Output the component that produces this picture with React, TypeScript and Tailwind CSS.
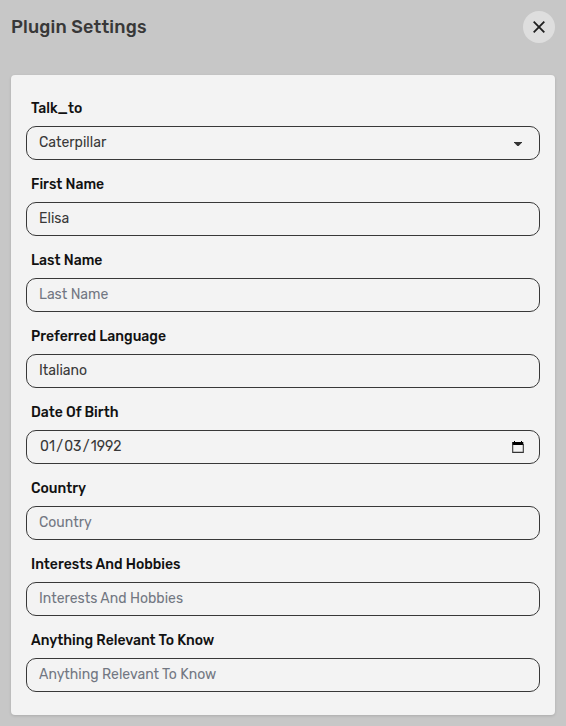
type Field = {
  label: string;
  value?: string;
  kind?: "select" | "date";
};

const fields: Field[] = [
  { label: "Talk_to", value: "Caterpillar", kind: "select" },
  { label: "First Name", value: "Elisa" },
  { label: "Last Name" },
  { label: "Preferred Language", value: "Italiano" },
  { label: "Date Of Birth", value: "01/03/1992", kind: "date" },
  { label: "Country" },
  { label: "Interests And Hobbies" },
  { label: "Anything Relevant To Know" },
];

function CalendarIcon() {
  return (
    <svg width="14" height="14" viewBox="0 0 14 14" className="mr-[2px] shrink-0">
      <path d="M3 1h1v1h6V1h1v1h1.3v3H1.2V2H3z" fill="#000" />
      <path d="M1.7 4v8.4h10.6V4" fill="none" stroke="#333" strokeWidth="1.1" />
    </svg>
  );
}

function DateValue({ value }: { value: string }) {
  const [month, day, year] = value.split("/");
  return (
    <span className="flex text-[#383838]">
      <span className="px-px">{month}</span>
      <span className="px-[0.25px]">/</span>
      <span className="px-px">{day}</span>
      <span className="px-[0.25px]">/</span>
      <span className="px-px">{year}</span>
    </span>
  );
}

function FieldRow({ field }: { field: Field }) {
  return (
    <div className="flex flex-col">
      <div className="flex h-9 items-center pt-[2px] pl-[5px] text-sm font-medium text-[#111]">{field.label}</div>
      <div className="flex h-[34px] items-center justify-between rounded-[10px] border border-[#383838] px-3 text-sm">
        {field.kind === "date" && field.value ? (
          <DateValue value={field.value} />
        ) : field.value ? (
          <span className="text-[#383838]">{field.value}</span>
        ) : (
          <span className="text-[#727782]">{field.label}</span>
        )}
        {field.kind === "select" && (
          <svg width="8" height="4" viewBox="0 0 8 4" className="mt-px mr-[5px]">
            <path d="M0 0h8v.6L4.6 4H3.4L0 .6z" fill="#333" />
          </svg>
        )}
        {field.kind === "date" && <CalendarIcon />}
      </div>
    </div>
  );
}

export default function App() {
  return (
    <div className="flex h-[726px] w-[566px] flex-col bg-[#c7c7c7] px-[11px] pt-[11px] font-['Rubik','Roboto',sans-serif]">
      <header className="flex h-8 items-center justify-between">
        <h1 className="text-lg font-medium tracking-[0.18px] text-[#383838]">Plugin Settings</h1>
        <button aria-label="Close" className="flex size-8 items-center justify-center rounded-full bg-[#dedede]">
          <svg width="12" height="12" viewBox="0 0 12 12">
            <path d="M.7.7l10.6 10.6M11.3.7L.7 11.3" stroke="#1f1f1f" strokeWidth="1.8" />
          </svg>
        </button>
      </header>
      <main className="mt-8 flex h-[640px] flex-col gap-[6px] rounded bg-[#f3f3f3] p-[15px] shadow-[0_1px_3px_rgba(0,0,0,0.14)]">
        {fields.map((field) => (
          <FieldRow key={field.label} field={field} />
        ))}
      </main>
    </div>
  );
}
